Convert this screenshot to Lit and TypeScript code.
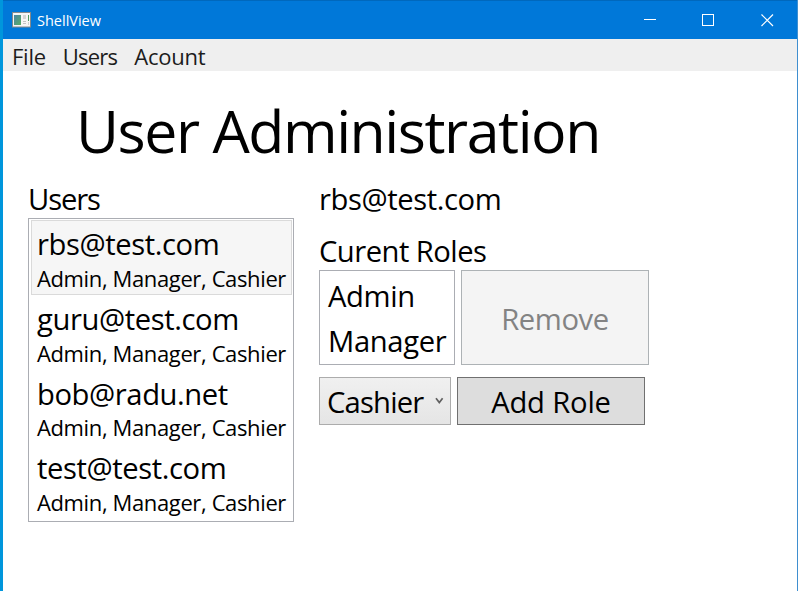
import { LitElement, html, css } from "lit";
import { customElement, property, state } from "lit/decorators.js";

interface User {
  email: string;
  roles: string;
}

@customElement("title-bar")
class TitleBar extends LitElement {
  static styles = css`
    :host { display: flex; height: 39px; box-sizing: border-box; background: #0078d9; border-top: 1px solid #0068bd; color: #fff; }
    .icon { display: block; margin: 11px 0 0 9px; width: 19px; height: 16px; flex: none; }
    .name { margin-left: 6px; font-size: 14.5px; line-height: 39px; flex: 1; }
    .btn { display: block; width: 58.5px; height: 38px; flex: none; }
  `;
  render() {
    return html`
      <svg class="icon" viewBox="0 0 19 16">
        <defs>
          <linearGradient id="g" x1="0" y1="0" x2="1" y2="1">
            <stop offset="0" stop-color="#4b86a8" /><stop offset="1" stop-color="#59ad62" />
          </linearGradient>
        </defs>
        <rect x="0.5" y="0.5" width="18" height="14.5" fill="#f6f6f6" stroke="#85898c" />
        <rect x="2" y="3" width="7" height="10" fill="url(#g)" />
        <rect x="11" y="3" width="3" height="4" fill="#d6d6d6" />
        <rect x="11" y="9" width="3" height="1" fill="#c4c4c4" />
        <rect x="11" y="11" width="3" height="1" fill="#c4c4c4" />
        <rect x="16" y="3" width="1" height="6" fill="#4d9b62" />
        <rect x="16" y="10" width="1" height="3" fill="#cfcfcf" />
      </svg>
      <span class="name">ShellView</span>
      <svg class="btn" viewBox="0 0 58.5 38"><path d="M22 18.5h12" stroke="#fff" shape-rendering="crispEdges" /></svg>
      <svg class="btn" viewBox="0 0 58.5 38"><rect x="22.5" y="13.5" width="11" height="11" fill="none" stroke="#fff" /></svg>
      <svg class="btn" viewBox="0 0 58.5 38"><path d="M22.5 13.5l11.5 11.5M34 13.5L22.5 25" stroke="#fff" stroke-width="1.2" /></svg>
    `;
  }
}

@customElement("user-item")
class UserItem extends LitElement {
  @property() email = "";
  @property() roles = "";
  @property({ type: Boolean, reflect: true }) selected = false;

  static styles = css`
    :host { display: block; box-sizing: border-box; height: 74.6px; padding: 3.4px 0 0 5px; border: 1px solid transparent; white-space: nowrap; }
    :host([selected]) { background: #f6f6f6; border-color: #dadada; }
    .email { font-size: 29.2px; line-height: 40px; letter-spacing: -0.014em; }
    .roles { font-size: 22px; line-height: 30px; letter-spacing: -0.017em; margin-top: -1.4px; }
  `;
  render() {
    return html`<div class="email">${this.email}</div><div class="roles">${this.roles}</div>`;
  }
}

@customElement("app-root")
class AppRoot extends LitElement {
  @state() private users: User[] = ["rbs@test.com", "guru@test.com", "bob@radu.net", "test@test.com"].map(
    (email) => ({ email, roles: "Admin, Manager, Cashier" }),
  );
  @state() private current = 0;

  static styles = css`
    :host { display: block; box-sizing: border-box; height: 591px; overflow: hidden; background: #fff; color: #000;
      border-left: 3px solid #0096dc; border-right: 1px solid #3f8fd0;
      font-family: "Open Sans", "Noto Sans", sans-serif; }
    .menu { display: flex; gap: 17px; box-sizing: border-box; height: 32px; padding: 1px 0 0 9px; background: #efefef;
      color: #1c1c1c; font-size: 22px; line-height: 32px; letter-spacing: -0.012em; }
    .menu .tight { letter-spacing: -0.035em; }
    h1 { margin: 21px 0 0 73px; font-weight: 400; font-size: 59px; line-height: 76px; letter-spacing: -0.0245em; white-space: nowrap; }
    .content { display: flex; align-items: flex-start; gap: 25px; margin: 10px 0 0 25px; }
    .label { font-size: 29.2px; line-height: 40px; letter-spacing: -0.014em; white-space: nowrap; }
    .heading { height: 40px; line-height: 42px; }
    .tighter { letter-spacing: -0.038em; }
    .list { box-sizing: border-box; width: 266px; height: 304px; padding: 1px 1px 0 2px; border: 1px solid #abadb3; }
    .row { display: flex; gap: 6px; }
    .roles-label { margin-top: 12px; letter-spacing: -0.018em; }
    .roles { box-sizing: border-box; width: 136px; height: 95px; padding: 3px 0 0 8px; border: 1px solid #abadb3; }
    .role { line-height: 45px; letter-spacing: -0.012em; }
    button { box-sizing: border-box; width: 188px; margin: 0; padding: 1px 0 0; border: 1px solid #707070; border-radius: 0;
      background: #ddd; color: #000; font-family: inherit; text-align: center; }
    .add { letter-spacing: -0.006em; }
    .remove { height: 95px; padding-top: 3px; background: #f4f4f4; border-color: #adb2b5; color: #838383; }
    .add-row { margin-top: 12px; }
    .combo { box-sizing: border-box; display: flex; width: 132px; height: 48px; padding: 4px 0 0 7px; border: 1px solid #acacac;
      background: linear-gradient(#f0f0f0, #e5e5e5); letter-spacing: -0.028em; }
    .combo span { flex: 1; }
    .chevron { display: block; width: 9px; height: 8px; margin: 15px 6px 0 0; }
  `;

  render() {
    return html`
      <title-bar></title-bar>
      <nav class="menu"><span>File</span><span class="tight">Users</span><span>Acount</span></nav>
      <h1>User Administration</h1>
      <div class="content">
        <section>
          <div class="label heading tighter">Users</div>
          <div class="list">
            ${this.users.map(
              (u, i) => html`<user-item
                .email=${u.email} .roles=${u.roles} .selected=${i === this.current}
                @click=${() => (this.current = i)}></user-item>`,
            )}
          </div>
        </section>
        <section>
          <div class="label heading">${this.users[this.current].email}</div>
          <div class="label heading roles-label">Curent Roles</div>
          <div class="row">
            <div class="roles">
              ${["Admin", "Manager"].map((r) => html`<div class="label role">${r}</div>`)}
            </div>
            <button class="label remove" disabled>Remove</button>
          </div>
          <div class="row add-row">
            <div class="combo label">
              <span>Cashier</span>
              <svg class="chevron" viewBox="0 0 9 8"><path d="M1 1.3L4.3 5.6L7.6 1.3" fill="none" stroke="#606060" stroke-width="1.7" /></svg>
            </div>
            <button class="label add">Add Role</button>
          </div>
        </section>
      </div>
    `;
  }
}
